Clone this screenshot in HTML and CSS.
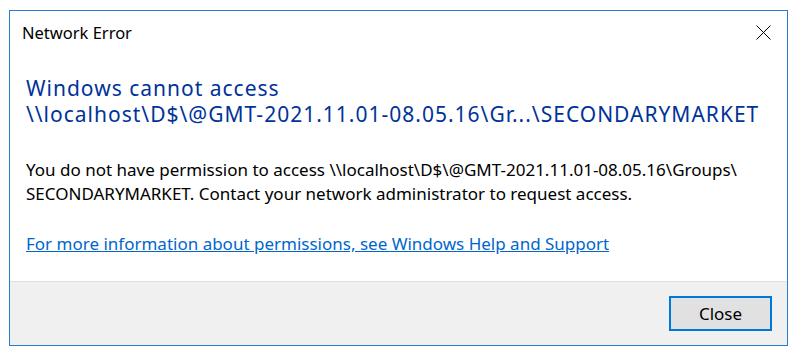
FILE: index.html
```html
<!DOCTYPE html>
<html lang="en">
<head>
    <meta charset="UTF-8">
    <title>Network Error</title>
    <link rel="stylesheet" href="styles.css">
</head>
<body>
    <div class="window">
        <div class="titlebar">
            <span class="title">Network Error</span>
            <svg class="close-x" width="15" height="15" viewBox="0 0 15 15">
                <path d="M0.5 0.5 L14.5 14.5 M14.5 0.5 L0.5 14.5" stroke="#000" stroke-width="1" fill="none"/>
            </svg>
        </div>
        <div class="content">
            <h1>Windows cannot access<br>\\localhost\D$\@GMT-2021.11.01-08.05.16\Gr...\SECONDARYMARKET</h1>
            <p class="message">You do not have permission to access \\localhost\D$\@GMT-2021.11.01-08.05.16\Groups\<br>SECONDARYMARKET. Contact your network administrator to request access.</p>
            <a class="help-link" href="#">For more information about permissions, see Windows Help and Support</a>
        </div>
        <div class="footer">
            <button class="close-btn">Close</button>
        </div>
    </div>
</body>
</html>
```

FILE: styles.css
```css
body {
    margin: 0;
    padding: 0;
    background-color: #ffffff;
    font-family: "Noto Sans", "Open Sans", sans-serif;
    color: #000;
}
.window {
    margin: 10px 0 0 9px;
    width: 777px;
    height: 334px;
    border: 1px solid #2a7ad2;
    display: flex;
    flex-direction: column;
    background-color: #ffffff;
}
.titlebar {
    display: flex;
    justify-content: space-between;
    align-items: flex-start;
    padding: 10px 16px 0 12px;
}
.title {
    font-size: 16.5px;
    line-height: 24px;
}
.close-x {
    display: block;
    margin-top: 4px;
}
.content {
    flex: 1;
    padding: 30px 16px 0 16px;
}
h1 {
    margin: 0;
    font-size: 21px;
    line-height: 26px;
    letter-spacing: 1px;
    font-weight: normal;
    color: #003399;
    white-space: nowrap;
}
.message {
    margin: 31px 0 0 0;
    font-size: 17px;
    line-height: 24px;
    white-space: nowrap;
}
.help-link {
    display: inline-block;
    margin-top: 26px;
    font-size: 17px;
    line-height: 24px;
    color: #0066cc;
    text-decoration: underline;
    white-space: nowrap;
}
.footer {
    height: 63px;
    border-top: 1px solid #dfdfdf;
    background-color: #f0f0f0;
    display: flex;
    justify-content: flex-end;
    align-items: center;
    padding-right: 15px;
}
.close-btn {
    width: 103px;
    height: 35px;
    border: 2px solid #0078d7;
    background-color: #e1e1e1;
    font-family: "Noto Sans", "Open Sans", sans-serif;
    font-size: 17px;
    color: #000;
    padding: 0;
}
```
